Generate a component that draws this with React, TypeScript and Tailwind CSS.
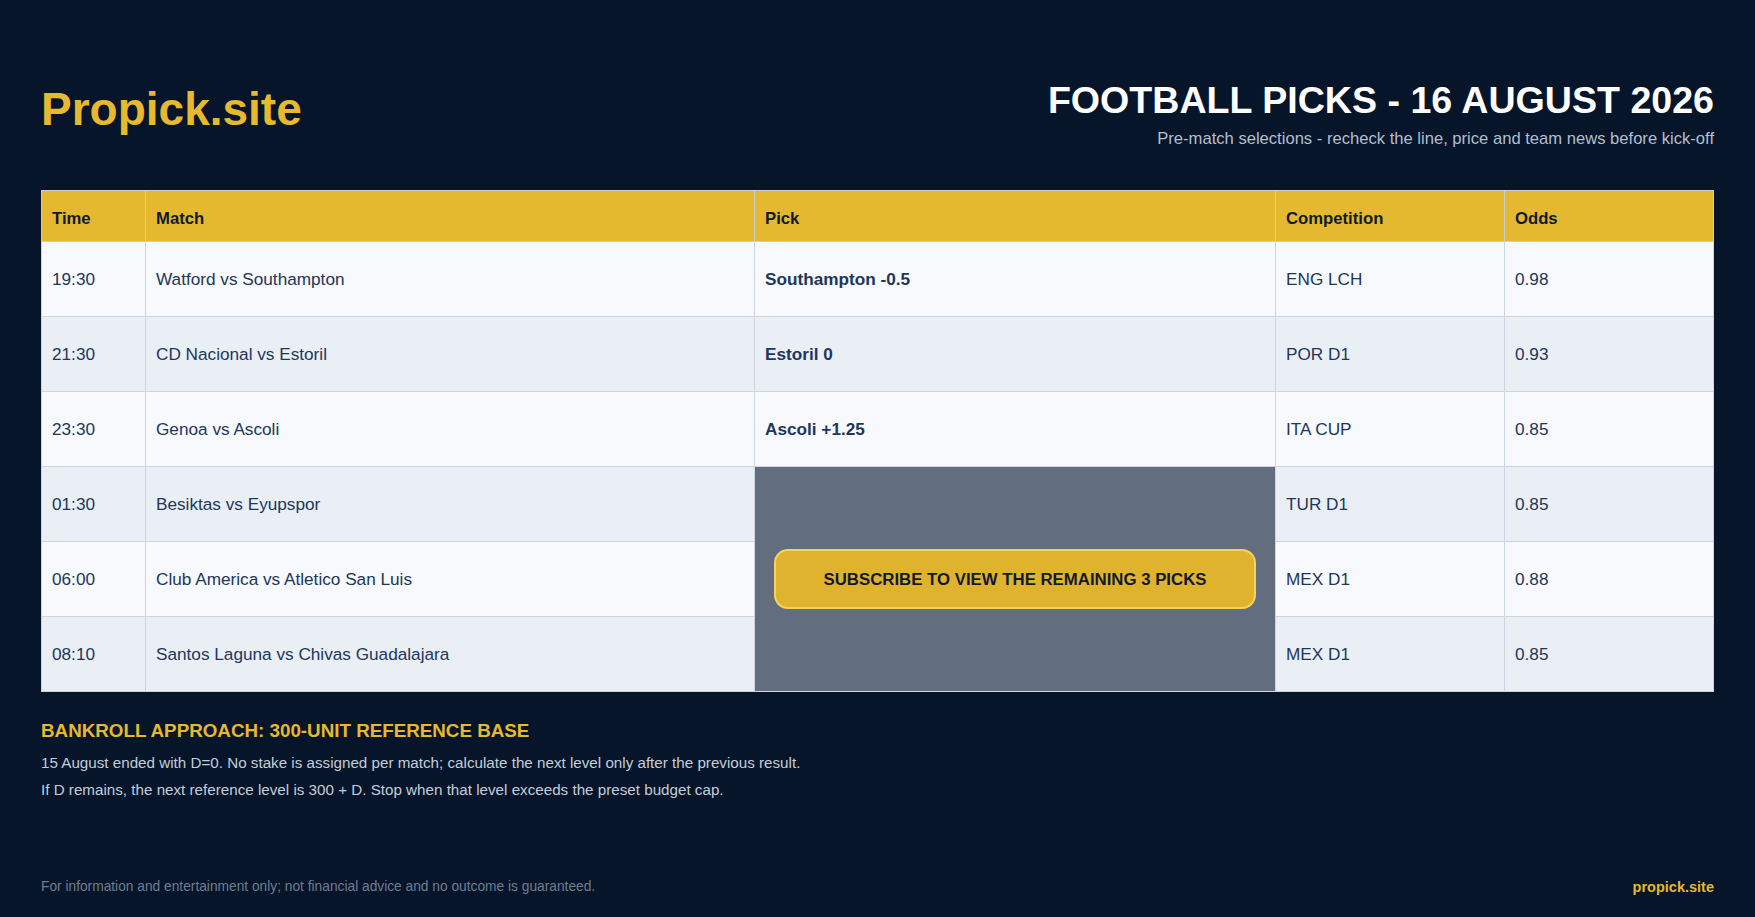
import React from "react";

type Row = { time: string; match: string; pick?: string; comp: string; odds: string };

const rows: Row[] = [
  { time: "19:30", match: "Watford vs Southampton", pick: "Southampton -0.5", comp: "ENG LCH", odds: "0.98" },
  { time: "21:30", match: "CD Nacional vs Estoril", pick: "Estoril 0", comp: "POR D1", odds: "0.93" },
  { time: "23:30", match: "Genoa vs Ascoli", pick: "Ascoli +1.25", comp: "ITA CUP", odds: "0.85" },
  { time: "01:30", match: "Besiktas vs Eyupspor", comp: "TUR D1", odds: "0.85" },
  { time: "06:00", match: "Club America vs Atletico San Luis", comp: "MEX D1", odds: "0.88" },
  { time: "08:10", match: "Santos Laguna vs Chivas Guadalajara", comp: "MEX D1", odds: "0.85" },
];

export default function App() {
  return (
    <div
      className="w-full h-[917px] bg-[#06152a] flex flex-col px-[41px]"
      style={{ fontFamily: '"Liberation Sans", Arial, sans-serif' }}
    >
      <header className="flex justify-between items-start pt-[82px]">
        <div className="mt-[4px] text-[46px] leading-none font-bold text-[#e6b92e]">Propick.site</div>
        <div className="flex flex-col items-end">
          <h1 className="text-[37.6px] leading-none font-bold text-white">FOOTBALL PICKS - 16 AUGUST 2026</h1>
          <p className="mt-[11px] text-[16.6px] leading-none text-[#b4bfcd]">
            Pre-match selections - recheck the line, price and team news before kick-off
          </p>
        </div>
      </header>

      <table className="mt-[43px] w-full table-fixed border-collapse border border-[#c3ccd8] text-[17.2px]">
        <colgroup>
          <col className="w-[104px]" />
          <col className="w-[609px]" />
          <col className="w-[521px]" />
          <col className="w-[229px]" />
          <col />
        </colgroup>
        <thead>
          <tr className="h-[51px] bg-[#e4b82f] text-[#0f1a2c] text-[16.7px]">
            {["Time", "Match", "Pick", "Competition", "Odds"].map((h) => (
              <th key={h} className="border border-[#c9ced4] px-[10px] pt-[4px] text-left font-bold">
                {h}
              </th>
            ))}
          </tr>
        </thead>
        <tbody>
          {rows.map((r, i) => (
            <tr key={r.time} className={`h-[75px] text-[#21365a] ${i % 2 === 0 ? "bg-[#f7f9fc]" : "bg-[#eaeff6]"}`}>
              <td className="border border-[#cdd5e0] px-[10px] pt-[2px]">{r.time}</td>
              <td className="border border-[#cdd5e0] px-[10px] pt-[2px]">{r.match}</td>
              {r.pick !== undefined ? (
                <td className="border border-[#cdd5e0] px-[10px] pt-[2px] font-bold">{r.pick}</td>
              ) : i === 3 ? (
                <td rowSpan={3} className="border border-[#cdd5e0] bg-[#626e7e] px-[19px] align-middle">
                  <div className="h-[60px] w-full rounded-[14px] border-2 border-[#f5d35a] bg-[#e0b32f] flex items-center justify-center text-[16.8px] font-bold text-[#111a2b]">
                    SUBSCRIBE TO VIEW THE REMAINING 3 PICKS
                  </div>
                </td>
              ) : null}
              <td className="border border-[#cdd5e0] px-[10px] pt-[2px]">{r.comp}</td>
              <td className="border border-[#cdd5e0] px-[10px] pt-[2px]">{r.odds}</td>
            </tr>
          ))}
        </tbody>
      </table>

      <section className="mt-[30px]">
        <h2 className="text-[18.8px] leading-none font-bold text-[#e6b92e]">BANKROLL APPROACH: 300-UNIT REFERENCE BASE</h2>
        <div className="mt-[8px] text-[15.2px] leading-[27px] text-[#c4cdd9]">
          <p>15 August ended with D=0. No stake is assigned per match; calculate the next level only after the previous result.</p>
          <p>If D remains, the next reference level is 300 + D. Stop when that level exceeds the preset budget cap.</p>
        </div>
      </section>

      <footer className="mt-auto pb-[20px] flex justify-between items-center text-[13.75px] leading-[20px]">
        <span className="text-[#6f7d91]">For information and entertainment only; not financial advice and no outcome is guaranteed.</span>
        <span className="text-[14.5px] font-bold text-[#e6b92e]">propick.site</span>
      </footer>
    </div>
  );
}
